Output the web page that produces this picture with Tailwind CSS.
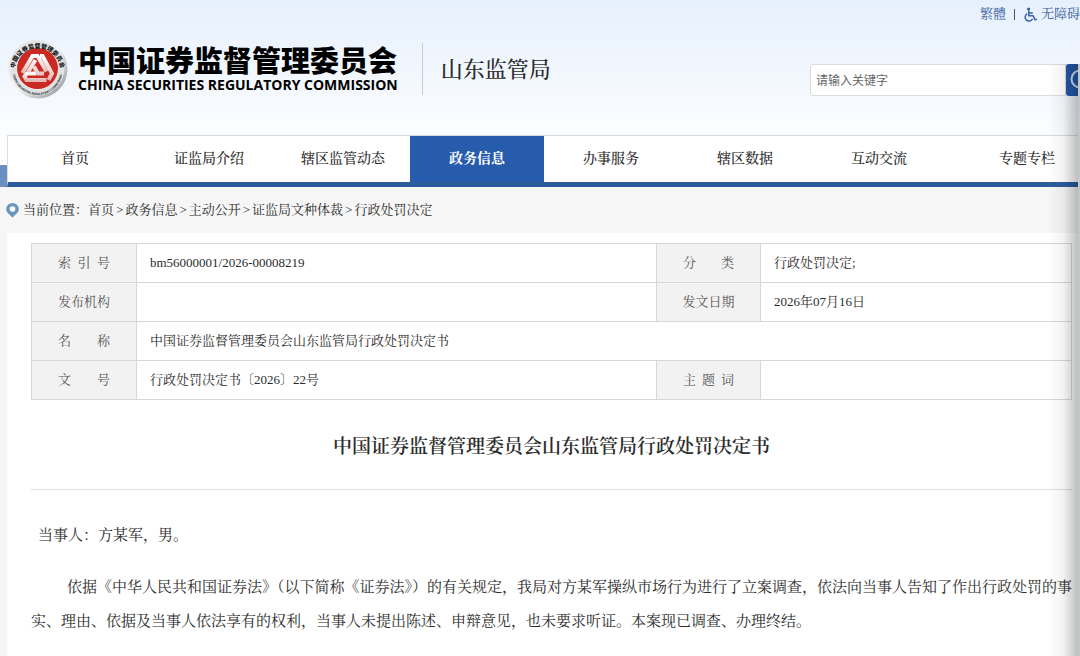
<!DOCTYPE html>
<html lang="zh-CN">
<head>
  <meta charset="UTF-8">
  <meta name="viewport" content="width=device-width, initial-scale=1.0">
  <title>中国证券监督管理委员会山东监管局行政处罚决定书</title>
  <script src="https://cdn.jsdelivr.net/npm/@tailwindcss/browser@4"></script>
</head>
<body class="relative min-h-screen overflow-x-hidden bg-[#f6f6f6] font-['Liberation_Serif','Noto_Serif_CJK_SC','Noto_Sans_CJK_SC',serif] text-[13px] text-[#2b2b2b]">
  <header class="overflow-hidden bg-linear-to-b from-[#e6f0fc] to-[#fcfdff] pb-[25px]">
    <div class="flex h-7 items-center justify-end leading-4 text-[#3a5e9c]">
      <a href="#">繁體</a>
      <span class="mx-2 h-[11px] w-px bg-[#46546c]"></span>
      <a href="#" class="flex items-center gap-[3px]">
        <svg class="size-[15px]" viewBox="0 0 15 15" fill="none" stroke="#3a62a4" stroke-width="1.5">
          <circle cx="5.6" cy="2" r="1.6" fill="#3a62a4" stroke="none" />
          <path d="M5.8 3.5v5.2h4.3l2 4.2 1.9-.8M6 6h3.8" />
          <path d="M4.3 6.6a3.9 3.9 0 1 0 5.3 5.1" />
        </svg>
        无障碍
      </a>
    </div>
    <div class="flex h-[82px] items-center pl-2">
      <a href="#" class="flex items-center gap-[10px]">
        <svg class="size-[60px]" viewBox="0 0 60 60">
          <defs>
            <linearGradient id="silver" x1="0" y1="0" x2="1" y2="1">
              <stop offset="0" stop-color="#d9dce0" />
              <stop offset=".5" stop-color="#f4f5f6" />
              <stop offset="1" stop-color="#85888c" />
            </linearGradient>
            <linearGradient id="mark" x1="0" y1="0" x2="0" y2="1">
              <stop offset="0" stop-color="#fff" />
              <stop offset="1" stop-color="#e3b9b4" />
            </linearGradient>
            <path id="ringTop" d="M6.500 32A23 23 0 1 1 52.500 32" />
            <path id="ringBottom" d="M4.500 31A25 25 0 0 0 54.500 31" />
          </defs>
          <circle cx="30" cy="30" r="29.500" fill="url(#silver)" />
          <circle cx="29.500" cy="29.500" r="27" fill="#dfe1e3" />
          <circle cx="29.500" cy="29.500" r="21.300" fill="#f0eeee" />
          <circle cx="29.500" cy="29.500" r="20.500" fill="#cb2a24" />
          <text class="font-['Noto_Sans_CJK_SC',sans-serif] text-[6px] font-black" fill="#222"><textPath href="#ringTop" startOffset="50%" text-anchor="middle">中国证券监督管理委员会</textPath></text>
          <text class="font-['Open_Sans',sans-serif] text-[3px] font-bold" fill="#222"><textPath href="#ringBottom" startOffset="50%" text-anchor="middle">CHINA SECURITIES REGULATORY COMMISSION</textPath></text>
          <g fill="none" stroke="url(#mark)" stroke-width="4" stroke-linejoin="miter">
            <path d="M14.500 34 24.500 17h5l9 15.500" />
            <path d="M28 34.500h-9l-2.500 3 2 3.500h20" />
            <path d="M32 17h2.500l9.500 17.500-3.500 6.500M20 33l7.500-12M36 34.500h-6l-4-7" />
          </g>
        </svg>
        <span class="flex flex-col gap-1 text-black">
          <span class="font-['Noto_Sans_CJK_SC',sans-serif] text-[29px] font-black leading-7">中国证券监督管理委员会</span>
          <span class="font-['Open_Sans',sans-serif] text-[14px] font-bold leading-4">CHINA SECURITIES REGULATORY COMMISSION</span>
        </span>
      </a>
      <span class="ml-6 h-[52px] w-px bg-[#c5ccd6]"></span>
      <span class="ml-[18px] text-[22px] font-medium">山东监管局</span>
      <form class="-mr-[26px] ml-auto mt-[22px] flex h-8 shrink-0">
        <input type="text" aria-label="请输入关键字" placeholder="请输入关键字" class="w-64 rounded-l-[3px] border border-[#dcdcdc] bg-white px-[5px] font-['Noto_Sans_CJK_SC',sans-serif] text-[12px] placeholder:text-[#666] placeholder:opacity-100">
        <button type="submit" aria-label="搜索" class="flex w-10 items-center rounded-[3px] bg-[#2459a9] pl-1">
          <svg class="size-6" viewBox="0 0 24 24" fill="none" stroke="#cfe2fa" stroke-width="2"><circle cx="10" cy="11" r="8.500" /><path d="m16 17 6 6" /></svg>
        </button>
      </form>
    </div>
  </header>

  <div class="flex items-end bg-[#fcfdff]">
    <span class="h-[22px] w-[7px] bg-[#6b8fc0]"></span>
    <nav class="grid flex-1 grid-cols-8 border-b-[5px] border-l border-t border-b-[#2d5c9c] border-l-[#d8dde3] border-t-[#d5dbe2] bg-white text-center text-[14px] font-medium leading-[46px]">
      <a href="#">首页</a>
      <a href="#">证监局介绍</a>
      <a href="#">辖区监管动态</a>
      <a href="#" class="bg-[#275bab] font-bold text-white">政务信息</a>
      <a href="#">办事服务</a>
      <a href="#">辖区数据</a>
      <a href="#">互动交流</a>
      <a href="#" class="pl-7">专题专栏</a>
    </nav>
  </div>

  <div class="flex h-[46px] items-center pl-1.5">
    <svg class="mr-1 h-[15px] w-[13px]" viewBox="0 0 13 15"><path d="M6.500 0a6.300 6.300 0 0 1 6.300 6.300c0 3.500-4.200 5.700-6.300 8.500C4.400 12 .2 9.800.2 6.300A6.300 6.300 0 0 1 6.500 0z" fill="#6995bd" /><circle cx="6.500" cy="6" r="2.800" fill="#fff" /></svg>
    当前位置：
    <div class="flex gap-[2px]">
      <a href="#">首页</a><span>&gt;</span>
      <a href="#">政务信息</a><span>&gt;</span>
      <a href="#">主动公开</a><span>&gt;</span>
      <a href="#">证监局文种体裁</a><span>&gt;</span>
      <a href="#">行政处罚决定</a>
    </div>
  </div>

  <main class="ml-[7px] min-h-[423px] bg-white pl-6 pr-2 pt-[10px]">
    <table class="w-full table-fixed border-collapse text-left">
      <colgroup>
        <col class="w-[105px]">
        <col class="w-1/2">
        <col class="w-[104px]">
        <col>
      </colgroup>
      <tbody>
        <tr class="h-[39px]">
          <th class="border border-[#d5d8da] bg-[#f2f2f2] px-[26px] font-normal text-[#555] [text-align-last:justify]">索 引 号</th>
          <td class="border border-[#d5d8da] px-[13px]">bm56000001/2026-00008219</td>
          <th class="border border-[#d5d8da] bg-[#f2f2f2] px-[26px] font-normal text-[#555] [text-align-last:justify]">分 类</th>
          <td class="border border-[#d5d8da] px-[13px]">行政处罚决定;</td>
        </tr>
        <tr class="h-[39px]">
          <th class="border border-[#d5d8da] bg-[#f2f2f2] text-center font-normal text-[#555]">发布机构</th>
          <td class="border border-[#d5d8da] px-[13px]"></td>
          <th class="border border-[#d5d8da] bg-[#f2f2f2] text-center font-normal text-[#555]">发文日期</th>
          <td class="border border-[#d5d8da] px-[13px]">2026年07月16日</td>
        </tr>
        <tr class="h-[39px]">
          <th class="border border-[#d5d8da] bg-[#f2f2f2] px-[26px] font-normal text-[#555] [text-align-last:justify]">名 称</th>
          <td class="border border-[#d5d8da] px-[13px]" colspan="3">中国证券监督管理委员会山东监管局行政处罚决定书</td>
        </tr>
        <tr class="h-[39px]">
          <th class="border border-[#d5d8da] bg-[#f2f2f2] px-[26px] font-normal text-[#555] [text-align-last:justify]">文 号</th>
          <td class="border border-[#d5d8da] px-[13px]">行政处罚决定书〔2026〕22号</td>
          <th class="border border-[#d5d8da] bg-[#f2f2f2] px-[26px] font-normal text-[#555] [text-align-last:justify]">主 题 词</th>
          <td class="border border-[#d5d8da] px-[13px]"></td>
        </tr>
      </tbody>
    </table>

    <h1 class="border-b border-[#dedede] pb-7 pt-[33px] text-center text-[19px] font-semibold leading-7">中国证券监督管理委员会山东监管局行政处罚决定书</h1>

    <article class="pt-7 text-[15px] leading-[34px]">
      <p class="mb-[18px] indent-[7px]">当事人：方某军，男。</p>
      <p class="indent-9">依据《中华人民共和国证券法》（以下简称《证券法》）的有关规定，我局对方某军操纵市场行为进行了立案调查，依法向当事人告知了作出行政处罚的事实、理由、依据及当事人依法享有的权利，当事人未提出陈述、申辩意见，也未要求听证。本案现已调查、办理终结。</p>
    </article>
  </main>

  <!-- page edge shadow -->
  <div class="pointer-events-none absolute bottom-0 right-0 top-16 w-8 border-r-2 border-[#c3c7cb] bg-linear-to-r from-black/0 via-black/5 to-black/25"></div>
</body>
</html>
